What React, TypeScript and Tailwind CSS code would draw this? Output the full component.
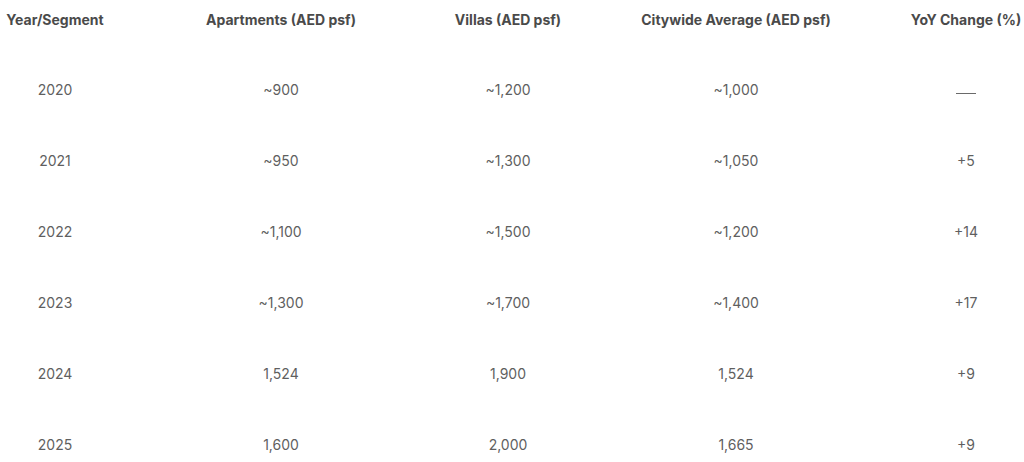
const HEADERS = [
  "Year/Segment",
  "Apartments (AED psf)",
  "Villas (AED psf)",
  "Citywide Average (AED psf)",
  "YoY Change (%)",
];

const ROWS = [
  ["2020", "~900", "~1,200", "~1,000", "—"],
  ["2021", "~950", "~1,300", "~1,050", "+5"],
  ["2022", "~1,100", "~1,500", "~1,200", "+14"],
  ["2023", "~1,300", "~1,700", "~1,400", "+17"],
  ["2024", "1,524", "1,900", "1,524", "+9"],
  ["2025", "1,600", "2,000", "1,665", "+9"],
];

const COLS = "grid grid-cols-[110px_342px_112px_344px_116px]";

export default function App() {
  return (
    <div className="w-[1024px] h-[462px] overflow-hidden bg-white font-['Inter','Liberation_Sans',sans-serif] text-[14px]">
      <div className={`${COLS} h-[38px] items-center text-center font-bold text-[#4a4a4a]`}>
        {HEADERS.map((h) => (
          <div key={h} className="whitespace-nowrap">
            {h}
          </div>
        ))}
      </div>
      <div className="pt-[16px]">
        {ROWS.map((row) => (
          <div key={row[0]} className={`${COLS} h-[71px] items-center text-center text-[#5f5f5f]`}>
            {row.map((cell, i) =>
              cell === "—" ? (
                <div key={i} className="flex justify-center pt-[8px]">
                  <span className="block w-[20px] h-px bg-[#6a6a6a]" />
                </div>
              ) : (
                <div key={i}>{cell}</div>
              )
            )}
          </div>
        ))}
      </div>
    </div>
  );
}
